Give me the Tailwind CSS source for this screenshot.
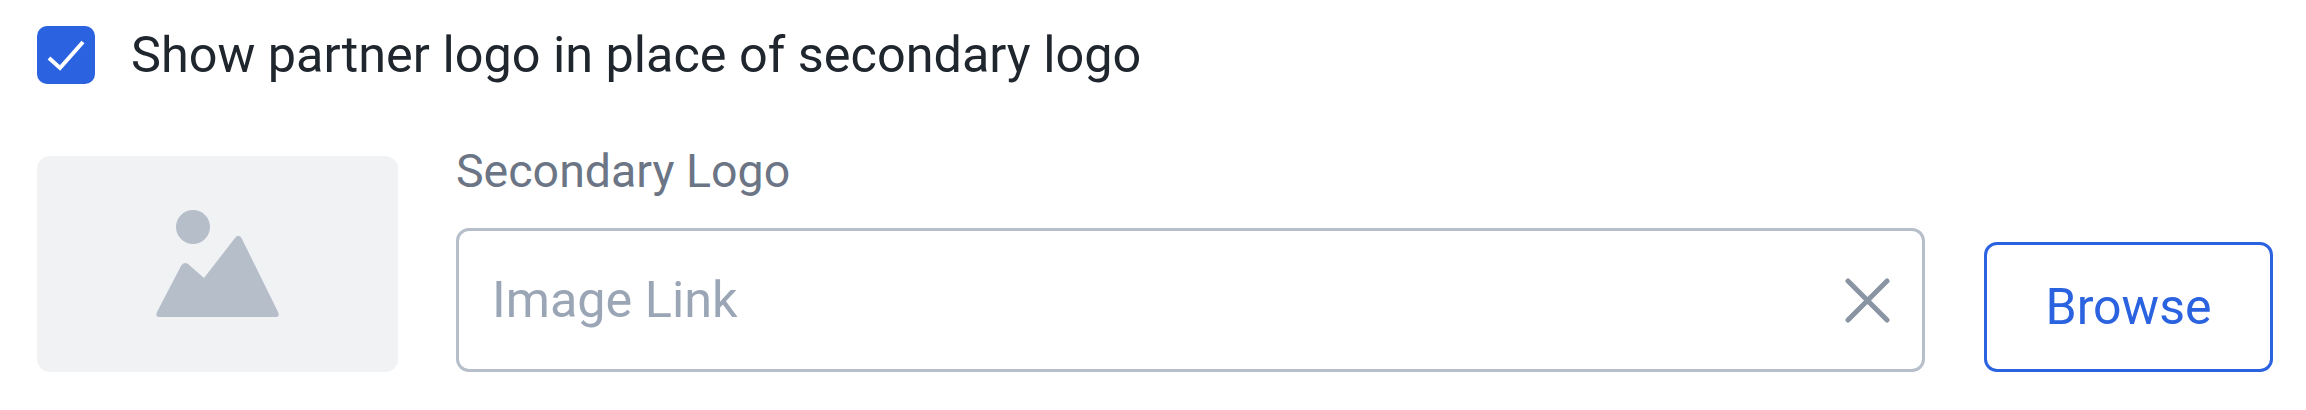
<!DOCTYPE html>
<html lang="en">
<head>
    <meta charset="UTF-8">
    <title>Secondary Logo</title>
    <script src="https://cdn.jsdelivr.net/npm/@tailwindcss/browser@4"></script>
</head>
<body class="w-[2306px] h-[410px] overflow-hidden bg-white font-['Roboto',sans-serif]">
    <div class="pl-[37px] pr-[33px] pt-[26px]">
        <label class="flex items-center h-[58px]">
            <span class="flex items-center justify-center w-[58px] h-[58px] rounded-[10px] bg-[#2a62e0]">
                <svg class="w-[38px] h-[38px]" viewBox="0 0 38 38" fill="none" stroke="#ffffff" stroke-width="4">
                    <path d="M2 22 L13 32 L36 6"/>
                </svg>
            </span>
            <span class="ml-[36px] text-[50.4px] leading-[58px] text-[#20262e]">Show partner logo in place of secondary logo</span>
        </label>

        <div class="flex mt-[72px]">
            <div class="flex items-center justify-center w-[361px] h-[216px] rounded-[13px] bg-[#f0f2f4]">
                <svg class="w-[123px] h-[108px]" viewBox="0 0 123 108" fill="#b6bec9">
                    <circle cx="37" cy="17" r="17"/>
                    <path d="M3 107 Q-1 107 1 102 L25 56 Q28 51 32 54 L48 68 L79 28 Q83 23 86 29 L122 102 Q124 107 120 107 Z"/>
                </svg>
            </div>

            <div class="ml-[58px] w-[1469px]">
                <div class="-mt-[8px] h-[80px] text-[46.5px] leading-[46px] text-[#6b7585]">Secondary Logo</div>
                <div class="flex items-center h-[144px] pl-[33px] pr-[32px] border-[3px] border-[#b6bec9] rounded-[13px] bg-white">
                    <span class="flex-1 text-[50.4px] text-[#9aa5b5]">Image Link</span>
                    <svg class="w-[45px] h-[45px]" viewBox="0 0 45 45" fill="none" stroke="#8a95a3" stroke-width="5" stroke-linecap="round">
                        <path d="M3 3 L42 42 M42 3 L3 42"/>
                    </svg>
                </div>
            </div>

            <button class="self-end flex items-center justify-center ml-[59px] w-[289px] h-[130px] border-[3px] border-[#2a62e0] rounded-[13px] bg-white text-[50px] text-[#2a62e0]">Browse</button>
        </div>
    </div>
</body>
</html>
